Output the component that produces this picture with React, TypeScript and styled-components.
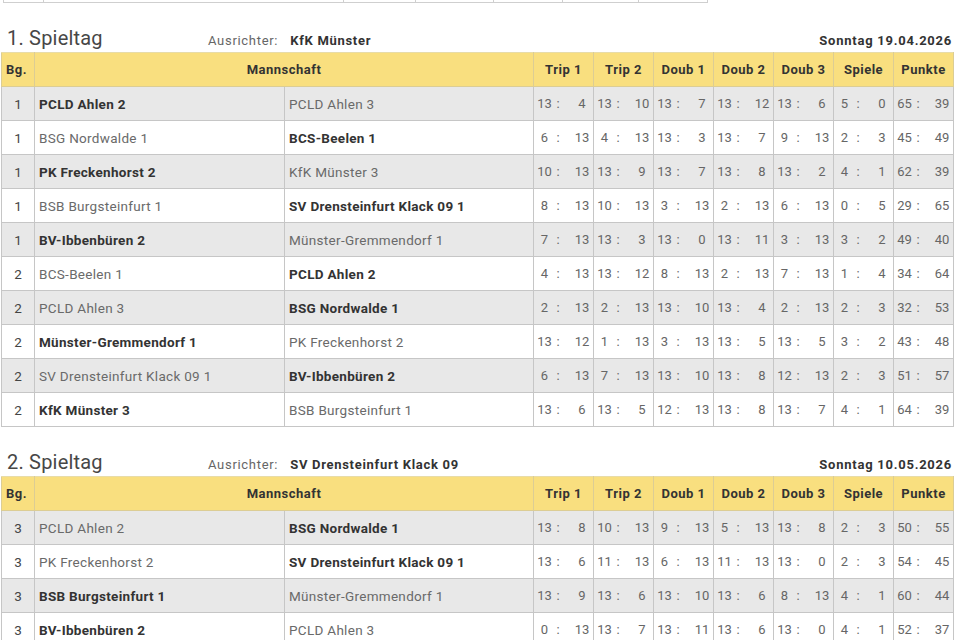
import React from "react";
import styled, { createGlobalStyle } from "styled-components";

const Global = createGlobalStyle`
  html, body { margin: 0; padding: 0; background: #fff; }
  body { font-family: Roboto, "Noto Sans", "Liberation Sans", sans-serif; color: #444; }
`;

const Page = styled.div`
  width: 960px;
  padding: 0 6px 0 1px;
  box-sizing: border-box;
  overflow: hidden;
  height: 640px;
`;

const Stub = styled.div`
  display: grid;
  grid-template-columns: 40px 300px 72px 78px 69px 76px 69px;
  margin-left: 2px;
  width: 705px;
  height: 3px;
  border-left: 1px solid #cfcfcf;
  border-bottom: 1px solid #cfcfcf;
  box-sizing: border-box;
`;

const StubCell = styled.div`
  border-right: 1px solid #cfcfcf;
`;

const Section = styled.section`
  display: flex;
  flex-direction: column;
`;

const TitleRow = styled.div`
  display: grid;
  grid-template-columns: 201px auto 1fr auto;
  align-items: baseline;
  height: 49px;
  box-sizing: border-box;
  padding: 23px 2px 0 6px;
`;

const Title = styled.h2`
  margin: 0;
  font-size: 20px;
  font-weight: 400;
  color: #474747;
  letter-spacing: 0.2px;
`;

const Host = styled.div`
  font-size: 13px;
  letter-spacing: 0.7px;
  color: #666;
  display: flex;
  gap: 12px;
`;

const HostName = styled.span`
  font-weight: 700;
  color: #333;
`;

const DateText = styled.div`
  grid-column: 4;
  font-size: 13px;
  letter-spacing: 0.75px;
  font-weight: 700;
  color: #333;
`;

const Table = styled.table`
  border-collapse: collapse;
  table-layout: fixed;
  width: 952px;
  font-size: 13.5px;
`;

const HeadCell = styled.th<{ $align?: string }>`
  background: #f9df7f;
  height: 33px;
  padding: 0 4px;
  font-weight: 700;
  font-size: 13px;
  letter-spacing: 0.5px;
  color: #333;
  text-align: ${(p) => p.$align || "center"};
  border: 1px solid #dccd94;
  border-top-color: #e8dca8;
`;

const Row = styled.tr<{ $odd: boolean }>`
  height: 34px;
  background: ${(p) => (p.$odd ? "#e8e8e8" : "#ffffff")};
`;

const Cell = styled.td`
  border: 1px solid #c6c6c6;
  padding: 0 4px;
  white-space: nowrap;
  overflow: hidden;
`;

const BgCell = styled(Cell)`
  text-align: center;
  color: #444;
  padding: 0;
`;

const TeamCell = styled(Cell)<{ $win: boolean }>`
  letter-spacing: 0.3px;
  font-weight: ${(p) => (p.$win ? 700 : 400)};
  color: ${(p) => (p.$win ? "#333" : "#6a6a6a")};
`;

const ScoreCell = styled.td`
  border: 1px solid #c6c6c6;
  padding: 0 2px 0 3px;
  color: #666;
  font-size: 13px;
`;

const Score = styled.div`
  display: grid;
  grid-template-columns: 15px 12px 1fr 18px;
  align-items: center;
  text-align: center;
  font-variant-numeric: tabular-nums;
`;

type Match = { bg: number; home: string; away: string; s: string[] };

const day1: Match[] = [
  { bg: 1, home: "PCLD Ahlen 2", away: "PCLD Ahlen 3", s: ["13:4", "13:10", "13:7", "13:12", "13:6", "5:0", "65:39"] },
  { bg: 1, home: "BSG Nordwalde 1", away: "BCS-Beelen 1", s: ["6:13", "4:13", "13:3", "13:7", "9:13", "2:3", "45:49"] },
  { bg: 1, home: "PK Freckenhorst 2", away: "KfK Münster 3", s: ["10:13", "13:9", "13:7", "13:8", "13:2", "4:1", "62:39"] },
  { bg: 1, home: "BSB Burgsteinfurt 1", away: "SV Drensteinfurt Klack 09 1", s: ["8:13", "10:13", "3:13", "2:13", "6:13", "0:5", "29:65"] },
  { bg: 1, home: "BV-Ibbenbüren 2", away: "Münster-Gremmendorf 1", s: ["7:13", "13:3", "13:0", "13:11", "3:13", "3:2", "49:40"] },
  { bg: 2, home: "BCS-Beelen 1", away: "PCLD Ahlen 2", s: ["4:13", "13:12", "8:13", "2:13", "7:13", "1:4", "34:64"] },
  { bg: 2, home: "PCLD Ahlen 3", away: "BSG Nordwalde 1", s: ["2:13", "2:13", "13:10", "13:4", "2:13", "2:3", "32:53"] },
  { bg: 2, home: "Münster-Gremmendorf 1", away: "PK Freckenhorst 2", s: ["13:12", "1:13", "3:13", "13:5", "13:5", "3:2", "43:48"] },
  { bg: 2, home: "SV Drensteinfurt Klack 09 1", away: "BV-Ibbenbüren 2", s: ["6:13", "7:13", "13:10", "13:8", "12:13", "2:3", "51:57"] },
  { bg: 2, home: "KfK Münster 3", away: "BSB Burgsteinfurt 1", s: ["13:6", "13:5", "12:13", "13:8", "13:7", "4:1", "64:39"] },
];

const day2: Match[] = [
  { bg: 3, home: "PCLD Ahlen 2", away: "BSG Nordwalde 1", s: ["13:8", "10:13", "9:13", "5:13", "13:8", "2:3", "50:55"] },
  { bg: 3, home: "PK Freckenhorst 2", away: "SV Drensteinfurt Klack 09 1", s: ["13:6", "11:13", "6:13", "11:13", "13:0", "2:3", "54:45"] },
  { bg: 3, home: "BSB Burgsteinfurt 1", away: "Münster-Gremmendorf 1", s: ["13:9", "13:6", "13:10", "13:6", "8:13", "4:1", "60:44"] },
  { bg: 3, home: "BV-Ibbenbüren 2", away: "PCLD Ahlen 3", s: ["0:13", "13:7", "13:11", "13:6", "13:0", "4:1", "52:37"] },
];

const cols = ["Trip 1", "Trip 2", "Doub 1", "Doub 2", "Doub 3", "Spiele", "Punkte"];

function ScoreBox({ v }: { v: string }) {
  const [a, b] = v.split(":");
  return (
    <Score>
      <span>{a}</span>
      <span>:</span>
      <span />
      <span>{b}</span>
    </Score>
  );
}

function Matchday({ n, host, date, rows }: { n: number; host: string; date: string; rows: Match[] }) {
  return (
    <Section>
      <TitleRow>
        <Title>{n}. Spieltag</Title>
        <Host>
          <span>Ausrichter:</span>
          <HostName>{host}</HostName>
        </Host>
        <DateText>{date}</DateText>
      </TitleRow>
      <Table>
        <colgroup>
          <col style={{ width: 33 }} />
          <col style={{ width: 250 }} />
          <col style={{ width: 249 }} />
          {cols.map((c) => (
            <col key={c} style={{ width: 60 }} />
          ))}
        </colgroup>
        <thead>
          <tr>
            <HeadCell $align="left">Bg.</HeadCell>
            <HeadCell colSpan={2}>Mannschaft</HeadCell>
            {cols.map((c) => (
              <HeadCell key={c}>{c}</HeadCell>
            ))}
          </tr>
        </thead>
        <tbody>
          {rows.map((m, i) => {
            const [sa, sb] = m.s[5].split(":").map(Number);
            return (
              <Row key={i} $odd={i % 2 === 0}>
                <BgCell>{m.bg}</BgCell>
                <TeamCell $win={sa > sb}>{m.home}</TeamCell>
                <TeamCell $win={sb > sa}>{m.away}</TeamCell>
                {m.s.map((v, j) => (
                  <ScoreCell key={j}>
                    <ScoreBox v={v} />
                  </ScoreCell>
                ))}
              </Row>
            );
          })}
        </tbody>
      </Table>
    </Section>
  );
}

export default function App() {
  return (
    <>
      <Global />
      <Page>
        <Stub>
          <StubCell />
          <StubCell />
          <StubCell />
          <StubCell />
          <StubCell />
          <StubCell />
          <StubCell />
        </Stub>
        <Matchday n={1} host="KfK Münster" date="Sonntag 19.04.2026" rows={day1} />
        <Matchday n={2} host="SV Drensteinfurt Klack 09" date="Sonntag 10.05.2026" rows={day2} />
      </Page>
    </>
  );
}
